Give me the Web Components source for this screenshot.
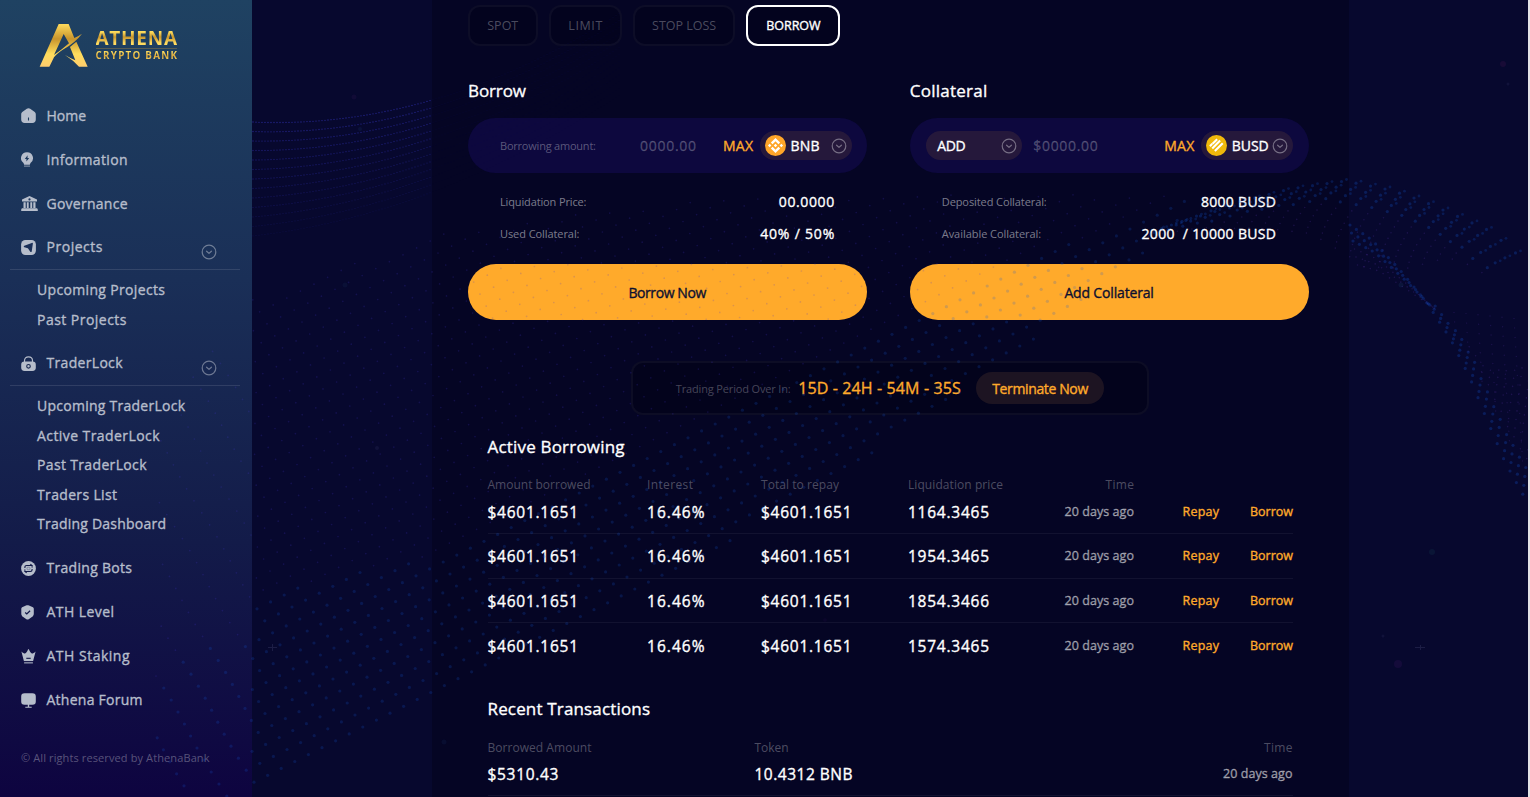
<!DOCTYPE html>
<html lang="en">
<head>
<meta charset="utf-8">
<title>Athena Crypto Bank</title>
<style>
html,body{margin:0;height:100%;overflow:hidden;background:#07082e}
body{font-family:"Open Sans","Noto Sans",sans-serif;font-weight:500;color:#fff;-webkit-text-stroke:.35px currentColor}
</style>
</head>
<body>
<ath-app></ath-app>
<script>
const define = (name, html, setup) => {
  const tpl = document.createElement('template');
  tpl.innerHTML = html;
  customElements.define(name, class extends HTMLElement {
    connectedCallback() {
      if (this.shadowRoot) return;
      this.attachShadow({mode: 'open'}).append(tpl.content.cloneNode(true));
      if (setup) setup(this, this.shadowRoot);
    }
  });
};

const icons = {
  home: '<path d="M7.5 .3c.7 0 1.2.2 1.7.5l4.2 3c.9.7 1.4 1.5 1.4 2.6v5.2c0 2.2-1.3 3.4-3.4 3.4H3.6C1.5 15 .2 13.8.2 11.6V6.4c0-1.1.5-1.9 1.4-2.6l4.2-3c.5-.3 1-.5 1.7-.5z"/><path d="M7.5 9.5v3" stroke="#1d3a5c" stroke-width="1.1"/>',
  info: '<path d="M6 .2a5.900 5.900 0 0 1 3.500 10.700L8.800 12.700H3.200L2.500 10.900A5.900 5.900 0 0 1 6 .2z"/><path d="M3 13.600h6v1H3z" opacity=".75"/><path d="M6.600 3.200 3.800 7h1.700l-.1 2.600L8.200 5.900H6.500z" fill="#1c375b"/>',
  gov: '<path d="M8.500 0 16 3.600V5.600H1V3.600zM2.500 6.200H4.700V12H2.500zM5.800 6.200H7.700V12H5.800zM9.300 6.200h1.900V12H9.300zM12.300 6.200h2.200V12h-2.200zM.9 12.200h15.200l.7 1.300v1.400H.2v-1.400z"/><circle cx="8.500" cy="3.400" r="1.100" fill="#1c335a"/>',
  projects: '<rect x=".1" y=".1" width="14.800" height="14.800" rx="4.300"/><path d="M11.900 3.600 10.700 11.400c-.1.700-1 .8-1.400.3L6.900 8.300 3.300 7.300c-.7-.3-.6-1.200 0-1.500l7.500-2.900c.7-.2 1.200.1 1.100.7z" fill="#1a2f58"/>',
  lock: '<path d="M3.500 6V4.700C3.500 2.300 5 .8 7.500.8s4 1.500 4 3.900V6" fill="none" stroke="#b6bdcb" stroke-width="1.200"/><path d="M3.600 5.600h7.800c2.400 0 3.400 1 3.400 3.400v2.500c0 2.400-1 3.400-3.400 3.400H3.600c-2.400 0-3.400-1-3.400-3.400V9c0-2.400 1-3.400 3.400-3.400z"/><circle cx="7.500" cy="10.300" r="1.800" fill="none" stroke="#17264f" stroke-width="1.100"/>',
  bots: '<circle cx="7.500" cy="7.500" r="7.400"/><path d="M3.900 6.900V6.200c0-1 .6-1.700 1.700-1.700h5.200L9.400 3.100M11.100 8.100v.7c0 1-.6 1.700-1.700 1.700H4.200l1.400 1.400" fill="none" stroke="#121a49" stroke-width="1.100"/><path d="M3.900 8.300v2.200M11.100 6.700V4.500" fill="none" stroke="#121a49" stroke-width=".9"/><rect x="6" y="6.200" width="3" height="2.600" rx=".8" fill="none" stroke="#121a49" stroke-width=".5" opacity=".6"/>',
  level: '<path d="M5 .6C6 .2 7.100.2 8 .6l3.400 1.300c.9.4 1.400 1 1.400 2v4.800c0 1.400-.7 2.500-1.900 3.300l-3.200 2.200c-.7.500-1.600.5-2.300 0L2.200 12C1 11.200.3 10.100.3 8.700V3.900c0-1 .5-1.600 1.400-2z"/><path d="m4.200 7.500 1.600 1.500L9.100 5.800" fill="none" stroke="#111747" stroke-width="1.200"/>',
  staking: '<path d="M.4 2.600C2 4.200 3.200 4.700 4 4.600 5.200 4 6.400 2.200 7.100.2h.8c.7 2 1.900 3.800 3.100 4.400.8.100 2-.4 3.600-2l-2.500 9.500H2.900z"/><path d="M3.100 12.900h8.800v1.700H3.100z" opacity=".65"/><path d="M5.300 9.300h4.400" stroke="#101445" stroke-width="1.100"/>',
  forum: '<path d="M3.600.3h7.800c2.400 0 3.400 1 3.400 3.300v4.900c0 2.300-1 3.300-3.400 3.300H8.200v1.900h2.500v1H4.300v-1h2.500v-1.900H3.600C1.200 11.800.2 10.800.2 8.500V3.600C.2 1.300 1.200.3 3.600.3z"/>'
};

/* The starry dotted wave drawn above the whole screen */
define('dot-wave', `<style>:host{position:absolute;inset:0;pointer-events:none;z-index:5}svg{display:block}</style>
<svg width="1528" height="797"></svg>`, (host, root) => {
  const lerp = (pts, x) => {
    for (let i = 1; i < pts.length; i++) if (x <= pts[i][0]) {
      const [a, b] = pts[i - 1], [c, d] = pts[i];
      return b + (d - b) * (x - a) / (c - a);
    }
    return pts[pts.length - 1][1];
  };
  const out = [];
  const dot = (x, y, r, c, o) => out.push(`<circle cx="${x.toFixed(1)}" cy="${y.toFixed(1)}" r="${r}" fill="${c}" opacity="${o.toFixed(2)}"/>`);
  const blue = '#145adc', violet = '#4638d0';
  /* ribbons at the upper left */
  for (let k = 0; k < 13; k++) for (let x = 253; x < 620; x += 3) {
    const t = (x - 252) / 180, q = k / 12;
    const y = 122 + 9.5 * k + (8 - 28 * q) * t - (30 - 6 * q) * t * t;
    dot(x, y, .65, '#3a3ad0', (x < 432 ? .6 : .07) * (1 - q * .8));
  }
  /* diagonal sheet */
  const low = [[150,838],[252,785],[432,705],[500,662],[640,590],[715,550],[860,462],[960,392],[1040,335],[1130,262],[1200,215],[1340,205]];
  const thick = [[150,150],[252,190],[432,150],[640,130],[860,120],[1040,80],[1130,40],[1200,20],[1340,0]];
  const top = [[150,420],[252,300],[432,236],[560,215],[700,200],[1000,193],[1200,195],[1349,205]];
  for (let j = -60; j < 130; j++) for (let i = -60; i < 100; i++) {
    const x = 700 + 13.6 * i + 7 * j + Math.sin(j * .7) * 1.2, y = 400 - 6.9 * i + 12 * j;
    if (x < 156 || x > 1190 || y < 0 || y > 797) continue;
    const b = lerp(low, x), t = lerp(thick, x);
    if (y > b || y < lerp(top, x)) continue;
    if (x < 252 && (i % 2 || y < 350)) continue;
    const big = y > b - t && !(x < 252 && y < 640);
    dot(x, y, big ? 1.6 : .85, big ? blue : violet, x < 252 ? .2 : .2);
  }
  /* crest towards the right edge */
  const crest = [[1180,222],[1230,204],[1290,189],[1345,181],[1390,190],[1420,200],[1450,213],[1490,231],[1510,248],[1528,264]];
  const size = [[1180,18],[1290,45],[1345,58],[1400,80],[1440,66],[1480,38],[1528,20]];
  for (let x = 1182; x < 1526; x += 14.5) {
    const y0 = lerp(crest, x), h = lerp(size, x), rows = Math.max(5, Math.round(h / 6));
    for (let k = 0; k < rows; k++) {
      const q = k / rows, px = x - 36 * Math.sin(q * 1.5);
      dot(px, y0 + h * q, k < 4 ? 1.6 : .8, k < 4 ? blue : '#6038b0', k < 4 ? .25 : .23);
      if (k < 3) dot(px + 5, y0 + h * q - 2, 1.4, blue, .22);
    }
  }
  /* inner lip falling to the lower right */
  const lip = [[1350,225],[1372,240],[1400,270],[1427,303],[1450,338],[1470,378],[1485,415],[1505,462],[1526,500]];
  const fan = [[1350,60],[1400,30],[1427,8],[1450,14],[1480,40],[1526,150]];
  for (let x = 1350; x < 1526; x += 6.4) {
    const y0 = lerp(lip, x), h = lerp(fan, x), up = x > 1427;
    const rows = up ? Math.round(h / 10) + 2 : 6;
    for (let k = 0; k < rows; k++) {
      const q = k / rows, y = up ? y0 - h * q : y0 + h * (q * .8);
      const b = up ? k < 4 : k < 3;
      dot(x + (up ? k : 1.5 * k), y, b ? 1.6 : .8, b ? blue : '#6038b0', b ? .26 : .24);
    }
  }
  for (let x = 1430; x < 1522; x += 12) for (let y = 310; y < lerp(lip, x) - 20; y += 9.5)
    dot(x + (y - 310) * .06, y + (x - 1430) * .1, .7, '#6038b0', .22);
  /* faint stars */
  [[1503,64,3,'#a02080'],[1432,552,3,'#208080'],[1398,664,4,'#8020a0'],[1401,285,2.5,'#3080a0'],[1508,84,1.5,'#6060a0'],[354,97,2.5,'#602080'],[360,129,2,'#3060a0'],[345,285,2.5,'#205080'],[444,742,2.5,'#205090'],[1383,636,1.5,'#6060a0'],[377,448,2,'#6060a0'],[825,620,2,'#401060']]
    .forEach(([x, y, r, c]) => dot(x, y, r, c, .11));
  out.push('<path d="M268 647.500h9M272.500 644v7M1415 647.500h10M1420.500 645v5" stroke="#8a8ac0" opacity=".16"/>');
  root.querySelector('svg').innerHTML = out.join('');
});

define('chevron-ring', `<style>:host{display:block;width:16px;height:16px;flex:none}svg{display:block}</style>
<svg width="16" height="16" fill="none" stroke="#fff" opacity=".37" stroke-width="1.200" stroke-linecap="round" stroke-linejoin="round"><circle cx="8" cy="8" r="6.800"/><path d="m5.600 7.200 2.400 2.200 2.400-2.200"/></svg>`);

define('ath-logo', `<style>
:host{display:flex;align-items:flex-start;gap:8px;padding:23px 0 0 38.500px;height:71px;box-sizing:border-box;-webkit-text-stroke:0}
svg{display:block;flex:none}
.n{display:flex;flex-direction:column;padding-top:5px}
fit-text{font-weight:700;color:transparent;-webkit-background-clip:text;background-clip:text}
.a{font-size:19px;line-height:20px;background-image:linear-gradient(#ffdc5c 20%,#c8952d 45%,#ffdb60 75%)}
.c{font-size:9.800px;line-height:14px;background-image:linear-gradient(#ffdc5c 20%,#d8a53a 50%,#ffdb60 80%)}
i{height:1px;background:#8f7b45;opacity:.5;margin-bottom:-.5px}
</style>
<svg width="49" height="45" viewBox="117 69 147 135"><defs><linearGradient id="g" gradientUnits="userSpaceOnUse" x1="0" y1="72" x2="0" y2="200"><stop stop-color="#ffdb5c"/><stop offset=".35" stop-color="#c8942c"/><stop offset=".7" stop-color="#ffdd5c"/><stop offset="1" stop-color="#ffcd6e"/></linearGradient></defs>
<path fill="url(#g)" fill-rule="evenodd" d="M176 72H206L223 114Q235 109 246 101Q226 128 187 150Q168 163 162 172L148 200H119ZM191 102L162 165Q183 151 207 130Z"/><path fill="url(#g)" d="M229 125L263 200H237Q220 181 195 165Q210 174 226 181L210 141Z"/></svg>
<div class="n"><fit-text class="a" w="81.5">ATHENA</fit-text><i></i><fit-text class="c" w="81.5">CRYPTO BANK</fit-text></div>`);

define('nav-item', `<style>
:host{display:flex;align-items:center;height:44px;box-sizing:border-box;padding-left:11px;margin:0 12px 0 10px;font-size:14px;color:#b6bdcb}
:host([open]){border-bottom:1px solid rgba(255,255,255,.11)}
svg{display:block;width:17px;height:15px;fill:#b6bdcb;margin-right:8.500px;flex:none}
::slotted(fit-text){margin-top:-1px}
chevron-ring{display:none;margin:9px 23.200px 0 auto}
:host([open]) chevron-ring{display:block}
</style><svg viewBox="0 0 17 15"></svg><slot></slot><chevron-ring></chevron-ring>`,
(h, r) => r.querySelector('svg').innerHTML = icons[h.getAttribute('icon')]);

define('nav-group', `<style>
:host{display:flex;flex-direction:column;padding:5.500px 0 7.700px 37px;font-size:14px;color:#b6bdcb}
::slotted(*){height:29.500px;line-height:29.500px}</style><slot></slot>`);

define('ath-sidebar', `<style>
:host{display:flex;flex-direction:column;width:252px;flex:none;background:linear-gradient(#1f4262 0%,#1a2f57 35%,#131b49 68%,#0e0440 100%)}
nav{padding-top:22.500px}
.copy{font-size:11px;line-height:18px;font-weight:400;color:rgba(255,255,255,.31);margin:27px 0 0 21px;-webkit-text-stroke:0}
</style><ath-logo></ath-logo>
<nav>
<nav-item icon="home"><fit-text w="39.5">Home</fit-text></nav-item>
<nav-item icon="info"><fit-text w="81">Information</fit-text></nav-item>
<nav-item icon="gov"><fit-text w="81">Governance</fit-text></nav-item>
<nav-item icon="projects" open><fit-text w="56">Projects</fit-text></nav-item>
<nav-group><fit-text w="128">Upcoming Projects</fit-text><fit-text w="89.5">Past Projects</fit-text></nav-group>
<nav-item icon="lock" open><fit-text w="76">TraderLock</fit-text></nav-item>
<nav-group><fit-text w="148">Upcoming TraderLock</fit-text><fit-text w="122.5">Active TraderLock</fit-text><fit-text w="109.5">Past TraderLock</fit-text><fit-text w="80">Traders List</fit-text><fit-text w="129">Trading Dashboard</fit-text></nav-group>
<nav-item icon="bots"><fit-text w="85.5">Trading Bots</fit-text></nav-item>
<nav-item icon="level"><fit-text w="67.5">ATH Level</fit-text></nav-item>
<nav-item icon="staking"><fit-text w="83">ATH Staking</fit-text></nav-item>
<nav-item icon="forum"><fit-text w="96">Athena Forum</fit-text></nav-item>
</nav><div class="copy"><fit-text w="188.5">© All rights reserved by AthenaBank</fit-text></div>`);

define('order-tab', `<style>
:host{display:flex;align-items:center;justify-content:center;height:41px;box-sizing:border-box;border:2px solid rgba(255,255,255,.045);border-radius:12px;background:#03031e;font-size:12.500px;font-weight:400;color:rgba(255,255,255,.29);-webkit-text-stroke:0}
:host([active]){border-color:#fff;color:#fff;font-weight:500;-webkit-text-stroke:.35px currentColor}
</style><slot></slot>`);

define('token-chip', `<style>
:host{display:flex;align-items:center;height:29px;box-sizing:border-box;border-radius:15px;background:rgba(255,170,41,.1);color:#fff;font-size:14px;padding:0 5px}
.ic{display:none;width:21px;height:21px;margin-right:5px;flex:none}
:host([token=bnb]) .bnb,:host([token=busd]) .busd{display:block}
chevron-ring{margin-left:auto}
</style>
<svg class="ic bnb" viewBox="0 0 32 32"><circle cx="16" cy="16" r="16" fill="#ffa629"/><path transform="translate(16 16) scale(1.150) translate(-16 -16)" fill="#fff" d="M12.116 14.404 16 10.520l3.886 3.886 2.260-2.260L16 6l-6.144 6.144zM6 16l2.260-2.260L10.520 16l-2.260 2.260zM12.116 17.596 16 21.480l3.886-3.886 2.260 2.259L16 26l-6.144-6.144zM21.480 16l2.260-2.260L26 16l-2.260 2.260zM18.292 16 16 18.294 13.706 16 16 13.706z"/></svg>
<svg class="ic busd" viewBox="0 0 32 32"><circle cx="16" cy="16" r="16" fill="#f0b90b"/><path d="M6 17l3.500-3.500M10 13.500l7-7M9.500 20.500l12-12M13.500 24.500l12-12" stroke="#fff" stroke-width="3.200"/></svg>
<slot></slot><chevron-ring></chevron-ring>`);

define('amount-field', `<style>
:host{display:flex;align-items:center;height:55px;border-radius:28px;background:#0d083e;font-size:14px;color:rgba(255,255,255,.22);box-sizing:border-box}
</style><slot></slot>`);

define('info-row', `<style>
:host{display:flex;align-items:center;justify-content:space-between;height:32px;padding:0 32.500px 0 32px;font-size:14px}
.l{font-size:11px;font-weight:400;color:rgba(255,255,255,.48);-webkit-text-stroke:0}
</style><span class="l"><slot name="label"></slot></span><slot></slot>`);

define('gold-button', `<style>
:host{display:flex;align-items:center;justify-content:center;height:56px;border-radius:28px;background:#ffaa2b;color:#0d1030;font-size:14px;margin-top:15px}
</style><slot></slot>`);

define('loan-card', `<style>
:host{display:flex;flex-direction:column;flex:1}
h2{margin:32.500px 0 15.500px;font-size:17px;line-height:24px;font-weight:500}
.rows{margin-top:12px}
</style><h2><slot name="title"></slot></h2><slot name="field"></slot><div class="rows"><slot name="row"></slot></div><slot></slot>`);

define('period-bar', `<style>
:host{display:flex;align-items:center;align-self:center;width:518px;height:54px;box-sizing:border-box;margin:41px 0 0 3px;padding-left:43px;border:2px solid rgba(255,255,255,.045);border-radius:12px;background:#03031c}
.l{font-size:11px;font-weight:400;color:rgba(255,255,255,.27);margin-right:7.500px;-webkit-text-stroke:0}
.t{font-size:16px;color:#ffaa2b;margin-right:15.500px}
.b{display:flex;align-items:center;justify-content:center;width:128px;height:32px;border-radius:16px;background:#1d1422;color:#ffaa2b;font-size:14px}
</style><span class="l"><fit-text w="115">Trading Period Over In:</fit-text></span><span class="t"><fit-text w="162.5">15D - 24H - 54M - 35S</fit-text></span><span class="b"><fit-text w="96">Terminate Now</fit-text></span>`);

define('loan-table', `<style>
:host{display:block;padding:0 16px 0 19.500px}
h2{margin:0;font-size:17px;line-height:24px;font-weight:500}
.r{display:grid;grid-template-columns:159.500px 114px 147px 126px 100px 85px 74px;align-items:center;height:44.700px;box-sizing:border-box;border-bottom:1px solid rgba(255,255,255,.055);font-size:15.500px}
.r>:nth-child(n+5){justify-self:end}
.h{height:18px;margin-top:16.500px;border:0;font-size:12px;font-weight:400;color:rgba(255,255,255,.29);-webkit-text-stroke:0}
.f{height:40.500px;padding-bottom:3px}
.z{border:0}
.d{font-size:12.500px;color:rgba(255,255,255,.5)}
.g{font-size:12.500px;color:#ffaa2b}
</style><h2><fit-text w="137">Active Borrowing</fit-text></h2>
<div class="r h"><fit-text w="103">Amount borrowed</fit-text><fit-text w="46">Interest</fit-text><fit-text w="78">Total to repay</fit-text><fit-text w="95">Liquidation price</fit-text><fit-text w="28.5">Time</fit-text></div>`,
(h, r) => {
  ['1164.3465', '1954.3465', '1854.3466', '1574.3465'].forEach((p, i) => {
    const row = document.createElement('div');
    row.className = 'r' + (i === 0 ? ' f' : '') + (i === 3 ? ' z' : '');
    row.innerHTML = `<fit-text w="90.5">$4601.1651</fit-text><fit-text w="57.5">16.46%</fit-text><fit-text w="90.5">$4601.1651</fit-text><fit-text w="81">${p}</fit-text><fit-text class="d" w="69.5">20 days ago</fit-text><fit-text class="g" w="36.5">Repay</fit-text><fit-text class="g" w="43">Borrow</fit-text>`;
    r.append(row);
  });
});

define('recent-table', `<style>
:host{display:block;padding:0 16px 0 19.500px;margin-top:29px}
h2{margin:0;font-size:17px;line-height:24px;font-weight:500}
.r{display:grid;grid-template-columns:267px 1fr auto;align-items:center;height:39px;padding-bottom:4px;box-sizing:border-box;border-bottom:1px solid rgba(255,255,255,.055);font-size:15.500px}
.h{height:18px;margin-top:17.500px;padding:0;border:0;font-size:12px;font-weight:400;color:rgba(255,255,255,.29);-webkit-text-stroke:0}
.d{font-size:12.500px;color:rgba(255,255,255,.5)}
</style><h2><fit-text w="162.5">Recent Transactions</fit-text></h2>
<div class="r h"><fit-text w="104">Borrowed Amount</fit-text><fit-text w="34">Token</fit-text><fit-text w="28.5">Time</fit-text></div>
<div class="r"><fit-text w="71">$5310.43</fit-text><fit-text w="98">10.4312 BNB</fit-text><fit-text class="d" w="69.5">20 days ago</fit-text></div>`);

define('trade-panel', `<style>
:host{display:flex;flex-direction:column;width:917px;margin-left:180px;box-sizing:border-box;padding:5px 40.500px 0 36px;background:#050524}
.tabs{display:flex;gap:11.300px}
.cards{display:flex;gap:43px}
.max{color:#ffaa2b}
loan-table{margin-top:20px}
</style>
<div class="tabs"><order-tab style="width:69.5px"><fit-text w="31">SPOT</fit-text></order-tab><order-tab style="width:73px"><fit-text w="34">LIMIT</fit-text></order-tab><order-tab style="width:102px"><fit-text w="64">STOP LOSS</fit-text></order-tab><order-tab active style="width:94px"><fit-text w="54.5">BORROW</fit-text></order-tab></div>
<div class="cards">
<loan-card><fit-text slot="title" w="58">Borrow</fit-text>
<amount-field slot="field"><fit-text w="96" style="font-size:11px;font-weight:400;margin-left:32px;color:rgba(255,255,255,.33);-webkit-text-stroke:0">Borrowing amount:</fit-text><fit-text w="56" style="margin-left:44px">0000.00</fit-text><fit-text class="max" w="30" style="margin-left:27px">MAX</fit-text><token-chip token="bnb" style="width:92px;margin-left:6.5px"><fit-text w="29">BNB</fit-text></token-chip></amount-field>
<info-row slot="row"><fit-text slot="label" w="86.5">Liquidation Price:</fit-text><fit-text w="55.5">00.0000</fit-text></info-row>
<info-row slot="row"><fit-text slot="label" w="79.5">Used Collateral:</fit-text><fit-text w="74">40% / 50%</fit-text></info-row>
<gold-button><fit-text w="78">Borrow Now</fit-text></gold-button></loan-card>
<loan-card><fit-text slot="title" w="77.5">Collateral</fit-text>
<amount-field slot="field"><token-chip style="width:96px;margin-left:16px;padding-left:11.5px"><fit-text w="28.5">ADD</fit-text></token-chip><fit-text w="64.5" style="margin-left:11.5px">$0000.00</fit-text><fit-text class="max" w="30" style="margin-left:66.5px">MAX</fit-text><token-chip token="busd" style="width:92px;margin-left:6.5px"><fit-text w="37">BUSD</fit-text></token-chip></amount-field>
<info-row slot="row"><fit-text slot="label" w="105">Deposited Collateral:</fit-text><fit-text w="75">8000 BUSD</fit-text></info-row>
<info-row slot="row"><fit-text slot="label" w="99.5">Available Collateral:</fit-text><fit-text w="134.5">2000&nbsp; / 10000 BUSD</fit-text></info-row>
<gold-button><fit-text w="89.5">Add Collateral</fit-text></gold-button></loan-card>
</div>
<period-bar></period-bar><loan-table></loan-table><recent-table></recent-table>`);

define('ath-app', `<style>
:host{display:flex;position:relative;width:100%;height:797px;overflow:hidden;background:#07082e;box-sizing:border-box;border-right:2px solid #e4e4e6}
</style><ath-sidebar></ath-sidebar><trade-panel></trade-panel><dot-wave></dot-wave>`);

/* Tracks its text so that it fills the width given in "w" */
define('fit-text', `<style>:host{display:block;white-space:nowrap;flex:none}span{display:inline-block}</style><span><slot></slot></span>`,
(h, r) => {
  const w = +h.getAttribute('w'), s = r.querySelector('span');
  const gap = (w - s.getBoundingClientRect().width) / (h.textContent.length - 1);
  s.style.letterSpacing = gap.toFixed(3) + 'px';
  h.style.width = w + 'px';
});
</script>
</body>
</html>
